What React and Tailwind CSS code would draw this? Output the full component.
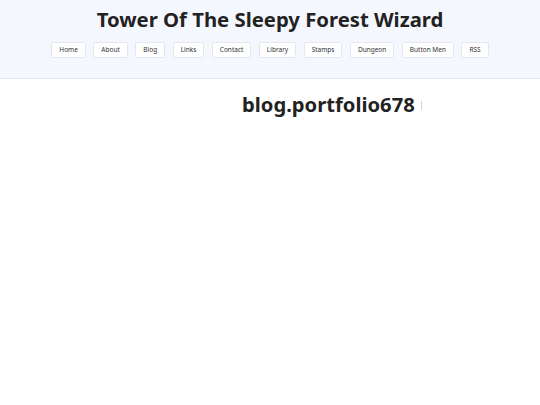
const links = ["Home", "About", "Blog", "Links", "Contact", "Library", "Stamps", "Dungeon", "Button Men", "RSS"];

export default function App() {
  return (
    <div className="min-h-[405px] bg-white text-[#222] font-['Noto_Sans',sans-serif]">
      <header className="bg-[#f5f7fe] border-b border-[#e3e6ee] h-[79px] flex flex-col items-center">
        <h1 className="mt-[4px] text-[20.3px] leading-[30px] font-bold text-[#222]">Tower Of The Sleepy Forest Wizard</h1>
        <nav className="mt-[8px] flex gap-[7.5px]">
          {links.map((l) => (
            <a
              key={l}
              className="h-[16px] px-[7px] flex items-center bg-white border border-[#e4e7ef] rounded-[2px] text-[6.5px] text-[#333]"
            >
              {l}
            </a>
          ))}
        </nav>
      </header>
      <main className="pl-[242px] pt-[10px]">
        <div className="flex items-center gap-[6px]">
          <h2 className="text-[20.2px] leading-[30px] font-bold text-[#222]">blog.portfolio678</h2>
          <span className="w-[1px] h-[9px] mt-[2px] bg-[#d4d4d4]"></span>
        </div>
      </main>
    </div>
  );
}
